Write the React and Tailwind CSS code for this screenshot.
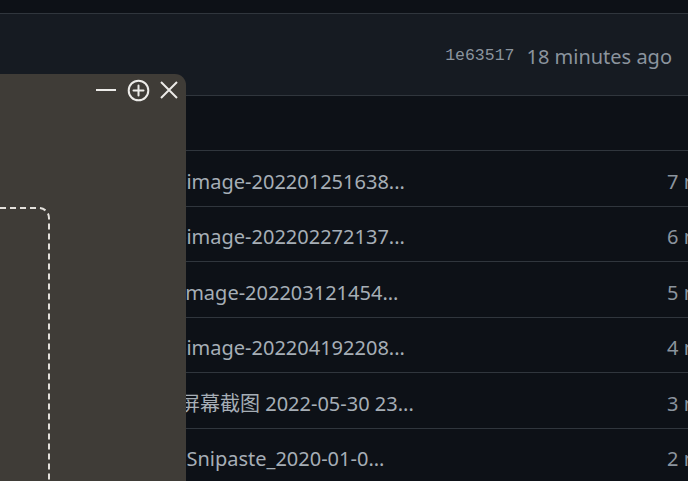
const files = [
  { name: '-image-202201251638...', age: '7 months ago' },
  { name: '-image-202202272137...', age: '6 months ago' },
  { name: 'image-202203121454...', age: '5 months ago' },
  { name: '-image-202204192208...', age: '4 months ago' },
  { name: '屏幕截图 2022-05-30 23...', age: '3 months ago' },
  { name: '-Snipaste_2020-01-0...', age: '2 months ago' }
]

function SnipToolbar () {
  return (
    <div className="absolute left-0 top-[74px] bottom-0 w-[186px] overflow-hidden rounded-tr-[11px] bg-[#3f3c37]">
      <div className="flex h-[32px] items-center justify-end gap-[10px] pr-[8px] text-[#ecebe8]">
        <svg width="22" height="22" viewBox="0 0 22 22" fill="none" stroke="currentColor" strokeWidth="2">
          <path d="M1 11h20" />
        </svg>
        <svg width="23" height="23" viewBox="0 0 23 23" fill="none" stroke="currentColor" strokeWidth="2" strokeLinecap="round">
          <circle cx="11.5" cy="11.5" r="9.8" />
          <path d="M11.5 6.5v10M6.5 11.5h10" />
        </svg>
        <svg width="18" height="18" viewBox="0 0 18 18" fill="none" stroke="currentColor" strokeWidth="2">
          <path d="M1 1l16 16M17 1L1 17" />
        </svg>
      </div>
      <svg className="absolute left-0 top-[133px]" width="60" height="280" fill="none">
        <path d="M-10 1H39a10 10 0 0 1 10 10V280" stroke="#e4e1dc" strokeWidth="2" strokeDasharray="6 4" />
      </svg>
    </div>
  )
}

export default function App () {
  return (
    <div className="relative h-[481px] w-[688px] overflow-hidden bg-[#0d1117] font-['Noto_Sans','Noto_Sans_CJK_SC',sans-serif]">
      <div className="h-[14px] border-b border-[#30363d]" />
      <div className="flex h-[82px] items-center justify-end gap-[12px] border-b border-[#30363d] bg-[#161b22] pr-[16px] pt-[4px] text-[#8b949e]">
        <span className="font-['Liberation_Mono',monospace] text-[16.5px]">1e63517</span>
        <span className="text-[20px]">18 minutes ago</span>
      </div>
      <div className="h-[55px] border-b border-[#30363d]" />
      {files.map((f) => (
        <div key={f.name} className="flex h-[55.5px] items-center border-b border-[#30363d] pt-[7px] text-[20px] text-[#a6aeb6]">
          <span className="ml-[180px] w-[487px] shrink-0 whitespace-nowrap">{f.name}</span>
          <span className="whitespace-nowrap text-[#8b949e]">{f.age}</span>
        </div>
      ))}
      <SnipToolbar />
    </div>
  )
}
